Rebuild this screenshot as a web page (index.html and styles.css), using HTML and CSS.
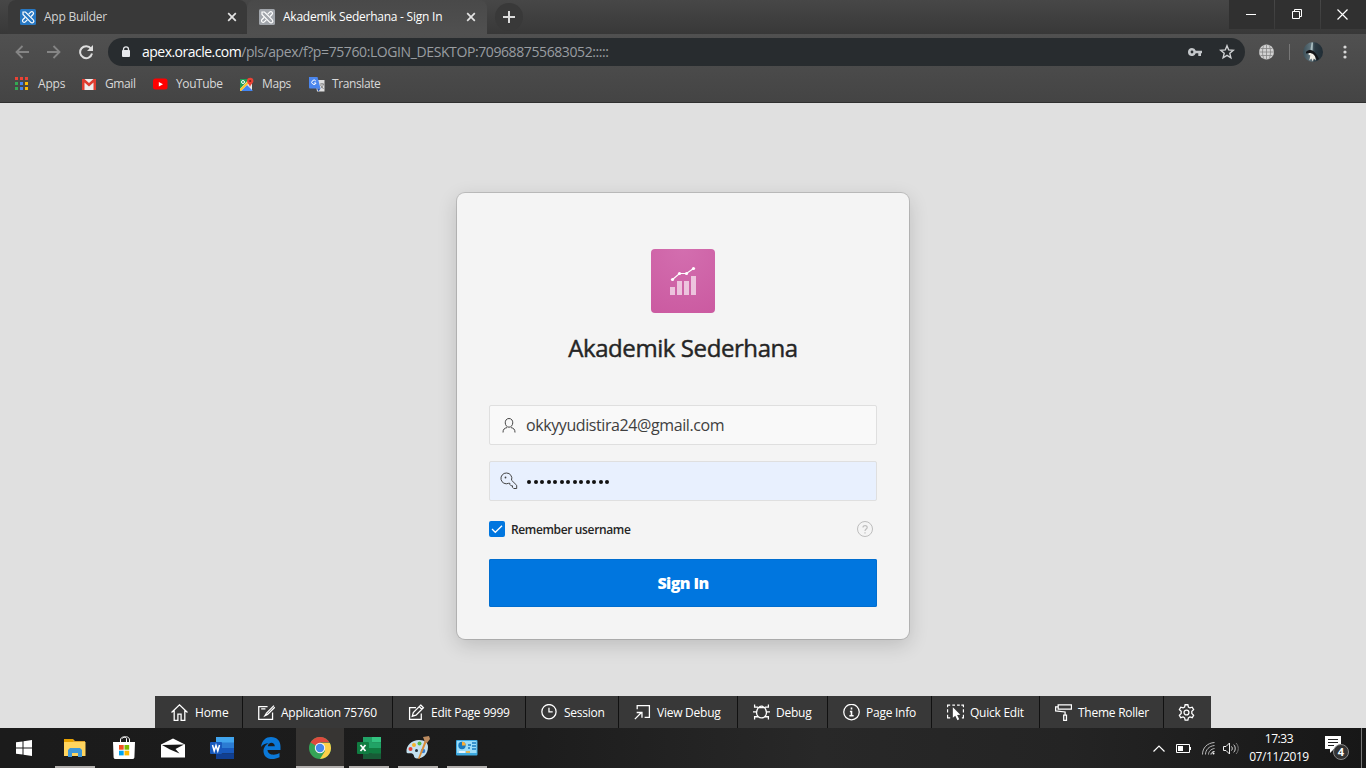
FILE: index.html
```html
<!DOCTYPE html>
<html lang="en">
<head>
<meta charset="utf-8">
<title>Akademik Sederhana - Sign In</title>
<link rel="stylesheet" href="styles.css">
</head>
<body>
<svg class="defs" width="0" height="0">
  <symbol id="apex" viewBox="0 0 16 16"><rect width="16" height="16" rx="1.500"/><g fill="none" stroke="#fff" stroke-width="1.200"><path d="M3 5.500V3h2.500l7.800 7.800a1.700 1.700 0 0 1-2.500 2.500z"/><path d="M8.700 5.200l2-2a1.600 1.600 0 0 1 2.300 2.300l-2 2M7.300 10.800l-2 2a1.600 1.600 0 0 1-2.300-2.300l2-2"/></g></symbol>
  <symbol id="cross" viewBox="0 0 10 10"><path d="M1.200 1.200l7.600 7.600M8.800 1.200L1.200 8.800" stroke="currentColor" stroke-width="1.700" fill="none"/></symbol>
</svg>
<div class="screen">
  <header class="tabstrip">
    <div class="tab"><svg class="fav blue" width="16" height="16"><use href="#apex"/></svg><span class="tab-title">App Builder</span><svg class="close" width="10" height="10"><use href="#cross"/></svg></div>
    <div class="tab active"><svg class="fav gray" width="16" height="16"><use href="#apex"/></svg><span class="tab-title">Akademik Sederhana - Sign In</span><svg class="close" width="10" height="10"><use href="#cross"/></svg></div>
    <div class="newtab"><svg width="12" height="12"><path d="M6 0v12M0 6h12" stroke="#dcdcdc" stroke-width="2"/></svg></div>
    <div class="winbtns">
      <div class="wb"><svg width="10" height="10"><path d="M0 5.500h10" stroke="#fff"/></svg></div>
      <div class="wb"><svg width="10" height="10" fill="none" stroke="#fff"><path d="M.5 2.500h7v7h-7zM2.500 2.500v-2h7v7h-2"/></svg></div>
      <div class="wb"><svg width="11" height="11"><path d="M.5.500l10 10M10.500.500l-10 10" stroke="#fff" stroke-width="1.200"/></svg></div>
    </div>
  </header>
  <div class="toolbar">
    <div class="nav">
      <svg width="14" height="14" class="dim"><path d="M14 7H1.500M7.500 1L1.500 7l6 6"/></svg>
      <svg width="14" height="14" class="dim"><path d="M0 7h12.500M6.500 1l6 6-6 6"/></svg>
      <svg width="16" height="16" viewBox="0 0 16 16"><path d="M12 4.600A6 6 0 1 0 13 9.500" fill="none" stroke="#dedede" stroke-width="2"/><path d="M14 1v6H8z" fill="#dedede"/></svg>
    </div>
    <div class="omnibox">
      <svg class="lock" width="10" height="12"><path d="M2.500 5V3.200a2.500 2.300 0 0 1 5 0V5" fill="none" stroke="#e8eaed" stroke-width="1.300"/><rect x="1" y="4" width="8" height="7" rx="1" fill="#e8eaed"/></svg>
      <span class="url"><span class="host">apex.oracle.com</span><span class="path">/pls/apex/f?p=75760:LOGIN_DESKTOP:709688755683052:::::</span></span>
      <svg class="pwkey" width="14" height="8"><path fill="#c4c7ca" fill-rule="evenodd" d="M4 0a4 4 0 0 1 3.800 2.700H14v2.600h-1V8h-2.700V5.300H7.800A4 4 0 1 1 4 0zm0 2.600a1.400 1.400 0 1 0 0 2.800 1.400 1.400 0 0 0 0-2.800z"/></svg>
      <svg class="star" width="16" height="16"><path d="M8 1.700l1.700 4.200 4.600.4-3.500 3 1.100 4.500L8 11.400l-3.900 2.400 1.100-4.500-3.500-3 4.600-.4z" fill="none" stroke="#d0d2d4" stroke-width="1.400"/></svg>
    </div>
    <svg class="globe" width="16" height="16"><circle cx="8.500" cy="8" r="7.500" fill="#d2d2d2"/><path d="M8.500 .5v15M1 8h15M2.500 4.500h12M2.500 11.500h12M6 1C4 5 4 11 6 15M11 1c2 4 2 10 0 14" fill="none" stroke="#858585" stroke-width=".8"/></svg>
    <i class="vsep"></i>
    <svg class="avatar" width="20" height="20"><defs><linearGradient id="av"><stop stop-color="#3d4f57"/><stop offset=".4" stop-color="#60757e"/><stop offset=".6" stop-color="#2b3a43"/><stop offset="1" stop-color="#202c34"/></linearGradient></defs><circle cx="10" cy="10" r="10" fill="url(#av)"/><path d="M8.500.500l-1 7 2 2 .5-9z" fill="#a9bdc0"/><path d="M5 12l3-2.500 4 2 .8 7-2-2-1 3-1.500-3-2 2 1-5z" fill="#f2eee6"/><path d="M3 10c4-4 9-2 13 7l-2 1c-3-7-6-8-11-6.500z" fill="#151518"/></svg>
    <svg class="menu" width="4" height="14"><circle cx="2" cy="2" r="1.600"/><circle cx="2" cy="7" r="1.600"/><circle cx="2" cy="12" r="1.600"/></svg>
  </div>
  <nav class="bookmarks">
    <span class="bm"><svg width="14" height="14"><g fill="#ea4335"><path d="M0 0h3v3H0zM5 0h3v3H5zM10 0h3v3h-3z"/></g><path d="M0 5h3v3H0zM0 10h3v3H0z" fill="#34a853"/><path d="M5 5h3v3H5zM5 10h3v3H5z" fill="#4285f4"/><path d="M10 5h3v3h-3zM10 10h3v3h-3z" fill="#fbbc05"/></svg><span>Apps</span></span>
    <span class="bm"><svg width="14" height="12"><path d="M0 1h14v11H0z" fill="#eee"/><path d="M0 1h2.500L7 5l4.500-4H14v11h-2.500V4.500L7 8.500l-4.500-4V12H0z" fill="#df3d30"/></svg><span>Gmail</span></span>
    <span class="bm"><svg width="15" height="12"><rect y=".5" width="14.500" height="11" rx="2.500" fill="red"/><path d="M5.800 4l4.200 2.200-4.200 2.200z" fill="#fff"/></svg><span>YouTube</span></span>
    <span class="bm"><svg width="15" height="15"><path d="M1 2h12v12H1z" fill="#e9e9e9"/><path d="M1 2h9L1 12z" fill="#209c55"/><path d="M2 14l6-6 6 6z" fill="#4285f4"/><path d="M1 12L12 1v3L2 14H1z" fill="#fbc52b"/><circle cx="4" cy="5" r="1.500" fill="none" stroke="#fff"/><path d="M11 10C10 7 8 6 8 4a3.200 3.200 0 0 1 6.400 0c0 2-2.400 3-3.400 6z" fill="#e84335"/><circle cx="11.200" cy="4" r="1.100" fill="#821f19"/></svg><span>Maps</span></span>
    <span class="bm"><svg width="16" height="15"><path d="M6 3h9.500v11.500H8z" fill="#dedede"/><path d="M0 0h8.500l3 11.500H1a1 1 0 0 1-1-1z" fill="#4b86ed"/><path d="M8 11.500h3.500l-2 3z" fill="#2455b6"/><path d="M6.800 4a2.200 2.200 0 1 0 .3 2H5" stroke="#fff" fill="none"/><path d="M11 7h4M13 6v1M11.500 8l3 4M14.500 7c-.5 2-1.500 3-2.500 4" stroke="#777" fill="none" stroke-width=".8"/></svg><span>Translate</span></span>
  </nav>
  <main class="page">
    <form class="card">
      <div class="logo"><svg width="28" height="30"><g fill="#fff" opacity=".62"><path d="M1 21h5v8H1zM8 15h5v14H8zM15 15h5v14h-5zM22 10h5v19h-5z"/></g><path d="M3.500 13.500L10.500 7.500h7l7-5" stroke="#fff" fill="none" stroke-width="1.200"/><g fill="#fff"><circle cx="3.500" cy="13.500" r="1.600"/><circle cx="10.500" cy="7.500" r="1.600"/><circle cx="17.500" cy="7.500" r="1.600"/><circle cx="24.500" cy="2.500" r="1.600"/></g></svg></div>
      <h1>Akademik Sederhana</h1>
      <div class="field"><svg width="18" height="18" fill="none" stroke="#444"><path d="M9 2.500c5.300 0 4.700 8.700 0 8.700s-5.300-8.700 0-8.700zM3 16.500c0-3.400 1.500-4.300 4-4.900M15 16.500c0-3.400-1.500-4.300-4-4.900"/></svg><span class="user">okkyyudistira24@gmail.com</span></div>
      <div class="field filled"><svg width="18" height="18" fill="none" stroke="#444"><path d="M6.500 1a5.300 5.300 0 0 1 5 7.200l5.200 5.100v3.200h-3l-1.200-1.200v-1.500h-1.400l-1.200-1.300v-1.200H8.600A5.400 5.400 0 1 1 6.500 1z"/><circle cx="5.500" cy="5.500" r=".9" fill="#444" stroke="none"/></svg><span class="dots"><i></i><i></i><i></i><i></i><i></i><i></i><i></i><i></i><i></i><i></i><i></i><i></i><i></i></span></div>
      <div class="remember"><span class="check"><svg width="16" height="16"><path d="M3 8l3.300 3.300L13 4.800" stroke="#fff" stroke-width="1.300" fill="none"/></svg></span><label>Remember username</label><svg class="help" width="16" height="16" fill="none" stroke="#bdbdbd"><circle cx="8" cy="8" r="7.500"/><path d="M6 6.500c0-2.700 4.200-2.500 4.200 0C10.200 8 8 8 8 10M8 11.200v1.300" stroke-width="1.200"/></svg></div>
      <div class="signin">Sign In</div>
    </form>
    <div class="devbar">
      <div><svg viewBox="0 0 16 16"><path d="M.5 8L8 .8 15.500 8M3 6v9.500h3.500V9.500h3v6H13V6"/></svg>Home</div>
      <div><svg viewBox="0 0 16 16"><path d="M9 2.500H.7v12h13V8M15 1.500L8 8.500 6.500 11 9 9.800 15.800 3M3 4.500h4"/></svg>Application 75760</div>
      <div><svg viewBox="0 0 16 16"><path d="M7.500 3.500H1.500v11h11V9M12 1l2.500 2.500L7.500 10.500l-3.500 1 1-3.500zM10.500 2.500L13 5"/></svg>Edit Page 9999</div>
      <div><svg viewBox="0 0 16 16"><circle cx="7.500" cy="7.200" r="6.700"/><path d="M7.500 3.500V7.500h3.500"/></svg>Session</div>
      <div><svg viewBox="0 0 16 16"><path d="M3 5V1.500h11.500v11H10M.8 14.200L7 8M2.500 8h5v5"/></svg>View Debug</div>
      <div><svg viewBox="0 0 16 16"><path d="M5 3.500h6c2 3 2 6.500 0 8.500-1.500 1.500-4.500 1.500-6 0-2-2-2-5.500 0-8.500zM1.500.5v2.500H5M14.500.5v2.500H11M0 7.500h3.500M12.500 7.500H16M1.500 14.500V12H5M14.500 14.500V12H11M6 3.500C6 1.500 10 1.500 10 3.500"/></svg>Debug</div>
      <div><svg viewBox="0 0 16 16"><circle cx="8" cy="7.600" r="7.300"/><path d="M8 3.200v2M6.500 7H8v4M6 11h4" stroke-width="1.500"/></svg>Page Info</div>
      <div><svg viewBox="0 0 16 16"><path d="M.5 3V1H3M5 1h2.500M9.500 1H12M13.500 1h2v2M15.500 5v3M15.500 10v3H14M.5 5v3M.5 10v3H3"/><path d="M5.500 3v10l2.300-2 2 4.200 1.700-.8-2-4 3-.3z" fill="#fff" stroke="none"/></svg>Quick Edit</div>
      <div><svg viewBox="0 0 16 16"><path d="M3 .8h12.500v4H3zM3 2.700H.6V6.500L9.500 7.500v3M8.200 10.500h2.600v5H8.200z"/></svg>Theme Roller</div>
      <div><svg viewBox="0 0 16 16"><path d="M6.700.7h2.600l.5 2.200 1.400.8 2.200-.7 1.300 2.300L13 6.900v2l1.700 1.700-1.300 2.300-2.200-.7-1.400.8-.5 2.200H6.700l-.5-2.200-1.400-.8-2.200.7-1.300-2.300L3 8.900v-2L1.300 5.300 2.600 3l2.200.7 1.400-.8z"/><circle cx="8" cy="8" r="2.300"/></svg></div>
    </div>
  </main>
  <footer class="taskbar">
    <div class="start"><svg width="16" height="16" fill="#fff"><path d="M0 2.300L6.500 1.400V7.500H0zM7.500 1.200L16 0v7.500H7.500zM0 8.500h6.500v6.100L0 13.700zM7.500 8.500H16V16l-8.500-1.200z"/></svg></div>
    <div class="task run"><svg width="22" height="20" viewBox="0 0 22 20"><path d="M0 1h9l2 2h10v15H0z" fill="#dfa32c"/><path d="M0 4h21.500v14H0z" fill="#ffd45e"/><path d="M0 1h9v3H0z" fill="#e7a100"/><path d="M4 19v-7l2-2h10l2 2v7h-4v-4H8v4z" fill="#3f97d7"/></svg></div>
    <div class="task"><svg width="24" height="24"><path d="M1 6h22l-.6 15.500a2 2 0 0 1-2 1.500H3.600a2 2 0 0 1-2-1.500z" fill="#fff"/><path d="M8.500 6V4c0-3.500 5-4 6-1.500V6M10.500 2.500C12 0 17.500 0 17.500 4v2" stroke="#fff" fill="none"/><path d="M7 9h4.700v4.700H7z" fill="#f25022"/><path d="M12.500 9h4.700v4.700h-4.700z" fill="#7fba00"/><path d="M7 14.700h4.700v4.700H7z" fill="#00a4ef"/><path d="M12.500 14.700h4.700v4.700h-4.700z" fill="#ffb900"/></svg></div>
    <div class="task"><svg width="24" height="20"><path d="M0 6.500L12 .5l12 6V19.500H0z" fill="#fff"/><path d="M1 7l22-.5-8.500 4.500 4 4.500L9 11.500z" fill="#171717"/></svg></div>
    <div class="task"><svg width="24" height="22"><path d="M6 0h18v6H6z" fill="#41a5ee"/><path d="M6 5.500h18V11H6z" fill="#2b7cd3"/><path d="M6 11h18v5.500H6z" fill="#185abd"/><path d="M6 16.500h18V22H6z" fill="#103f91"/><rect y="5" width="12" height="12" rx="1" fill="#185abd"/><path d="M2.500 8l1.700 6L6 8.500 7.800 14l1.700-6" fill="none" stroke="#fff" stroke-width="1.500"/></svg></div>
    <div class="task"><svg width="22" height="22"><path d="M1 10C2 3 6 0 11 0c6 0 9.500 4 9.500 9.500V13h-13c.2 5 7 6 12 3v4.300C12 24 4 22 3.500 14.500 3.300 11 5.500 7.500 9 6 5 6.300 2.500 8 1 10zm6.800-.7h7C14.800 4.500 8.300 4.500 7.800 9.300z" fill="#0b78d7"/></svg></div>
    <div class="task current"><svg width="22" height="22"><circle cx="11" cy="11" r="11" fill="#35a457"/><path d="M11 11L1.500 5.500A11 11 0 0 1 20.500 5.500H11z" fill="#df4a3e"/><path d="M11 6h9.800A11 11 0 0 1 11 22l5-8z" fill="#fdd04a"/><circle cx="11" cy="11" r="5.200" fill="#f5f5f5"/><circle cx="11" cy="11" r="4.200" fill="#4687ed"/></svg></div>
    <div class="task run"><svg width="24" height="22"><path d="M6 0h18v22H6z" fill="#185c37"/><path d="M6 0h9v11H6z" fill="#21a366"/><path d="M15 0h9v5.500h-9z" fill="#33c481"/><path d="M15 5.500h9V11h-9z" fill="#21a366"/><path d="M15 11h9v5.500h-9zM6 11h9v5H6z" fill="#107c41"/><rect y="5" width="12" height="12" rx="1" fill="#107c41"/><path d="M3.500 8l5 6M8.500 8l-5 6" stroke="#fff" stroke-width="1.700"/></svg></div>
    <div class="task run"><svg width="24" height="24"><path d="M.5 16C0 9 6 4 13 4c6 0 9 3 9 7 0 7-5 11.500-11 11.500-4 0-2-4-5-5-2-1-5 1-5.500-1.500z" fill="#c4e1ef"/><circle cx="4.500" cy="13" r="2" fill="#e54335"/><circle cx="8" cy="9" r="2" fill="#f3b42c"/><circle cx="13.500" cy="7.500" r="2" fill="#55b949"/><circle cx="10.500" cy="14.500" r="1.500" fill="#26333b"/><circle cx="17" cy="15" r="2.300" fill="#3a80cf"/><path d="M19 4l2 1-7.500 18-1.500-.5z" fill="#d98b38"/><path d="M17 1l6-1 1 3-3 4-2-1z" fill="#bd8c60"/></svg></div>
    <div class="task run"><svg width="22" height="16"><rect width="21.500" height="15.500" rx="1" fill="#3da9e0"/><path d="M1 1h19.500v12H1z" fill="#9bdcf8"/><circle cx="6" cy="5.500" r="3.700" fill="#1879bd"/><path d="M6 5.500V1.800a3.700 3.700 0 0 1 3.700 3.700z" fill="#fbad32"/><path d="M12 8h2M12 5h3M16 3h4M16 6h4M16 9h4" stroke="#1879bd" stroke-width="1.500"/><path d="M3 12h6" stroke="#fff" stroke-width="1.500"/><path d="M10 12h4" stroke="#f7a821" stroke-width="1.500"/></svg></div>
    <div class="tray">
      <svg width="12" height="7"><path d="M.5 6.500L6 1l5.500 5.500" fill="none" stroke="#fff" stroke-width="1.200"/></svg>
      <svg class="bat" width="15" height="9"><path d="M.5.500h13v8H.5z" fill="none" stroke="#fff"/><path d="M2 2h5v5H2zM14 3h1v3h-1z" fill="#fff"/></svg>
      <svg class="wifi" width="13" height="13" fill="none" stroke="#bbb"><path d="M.5 12.500C.5 6 5 1 12.500.500M3.500 12.500C3.500 8 7 4 12.500 3.500M6.500 12.500c0-3 2.500-5.500 6-6"/><path d="M9 12.500c0-1.500 1.500-3 3.500-3" stroke="#fff"/><circle cx="11.500" cy="11.500" r="1" fill="#fff" stroke="none"/></svg>
      <svg class="vol" width="17" height="13" fill="none" stroke="#eee"><path d="M.5 4.500H3L6.500 1v11L3 8.500H.5z"/><path d="M8.500 4.500c1 1 1 3 0 4M10.700 2.700c2 2 2 5.600 0 7.600"/><path d="M13 1c3 3 3 8 0 11" stroke="#777"/></svg>
      <div class="clock"><div>17:33</div><div class="date">07/11/2019</div></div>
      <div class="notif"><svg width="16" height="17"><path d="M0 0h16v13H9l-4 4v-4H0z" fill="#fff"/><path d="M3 3.500h10M3 6.500h10M3 9.500h6" stroke="#222"/></svg><b>4</b></div>
      <i class="desk"></i>
    </div>
  </footer>
</div>
</body>
</html>
```
FILE: styles.css
```css
* { box-sizing: border-box; }
body { margin: 0; font-family: "Open Sans", "Noto Sans", sans-serif; font-size: 12px; color: #fff; }
svg { display: block; flex: none; }
.defs { position: absolute; }
.screen { width: 1366px; height: 768px; overflow: hidden; display: flex; flex-direction: column; background: #e0e0e0; white-space: nowrap; }
.tabstrip { height: 34px; display: flex; align-items: stretch; padding-left: 8px; background: linear-gradient(#474747, #383838); flex: none; }
.tab { width: 239px; display: flex; align-items: center; padding: 0 10px 0 12px; background: #393939; border-radius: 8px 8px 8px 0; color: #d2d2d2; }
.tab.active { width: 240px; padding-right: 11px; background: linear-gradient(#494949, #505050); border-radius: 8px 8px 0 0; color: #fff; }
.fav { margin-right: 8px; }
.fav.blue { fill: #2878c3; }
.fav.gray { fill: #a2a6ac; }
.tab-title { flex: 1; letter-spacing: -0.24px; padding-bottom: 1px; }
.close { color: #e4e4e4; }
.newtab { width: 28px; height: 28px; margin: 3px 0 0 8px; border-radius: 50%; background: #393939; display: flex; align-items: center; justify-content: center; }
.winbtns { display: flex; margin-left: auto; height: 29px; gap: 1px; }
.wb { width: 45px; background: #303030; display: flex; align-items: center; justify-content: center; padding: 0 1px 1px 0; }
.wb:last-child { padding-right: 2px; }
.toolbar { height: 36px; display: flex; align-items: center; background: linear-gradient(#505050, #4a4a4a); flex: none; }
.nav { width: 108px; display: flex; align-items: center; gap: 18px; padding-left: 15px; }
.dim { fill: none; stroke: #858585; stroke-width: 1.8; }
.omnibox { width: 1137px; height: 28px; border-radius: 14px; background: #282c2f; display: flex; align-items: center; padding: 0 10px 0 13px; }
.lock { margin-right: 11px; }
.url { flex: 1; font-size: 14px; color: #999da1; letter-spacing: -0.4px; padding-bottom: 1px; }
.host { color: #fff; letter-spacing: -0.52px; }
.star { margin-left: 17px; }
.globe { margin-left: 13px; }
.vsep { width: 1px; height: 16px; background: #777; margin: 0 13px 0 15px; }
.menu { margin-left: 20px; fill: #d8d8d8; }
.bookmarks { height: 33px; display: grid; grid-template-columns: 67px 71px 86px 70px 80px; padding: 0 0 4px 15px; align-items: center; background: linear-gradient(#4a4a4a, #444); border-bottom: 1px solid #303030; flex: none; color: #d9d9d9; letter-spacing: -0.4px; }
.bm { display: grid; grid-template-columns: 23px auto; align-items: center; }
.bm span { padding-bottom: 2px; }
.bm:first-child { letter-spacing: -0.2px; }
.page { height: 625px; flex: none; display: flex; flex-direction: column; align-items: center; justify-content: space-between; padding-top: 90px; }
.card { width: 452px; height: 446px; border-radius: 8px; background: #f4f4f4; box-shadow: 0 0 0 1px rgba(0,0,0,.14), 0 6px 20px rgba(0,0,0,.16); padding: 56px 32px 32px; display: flex; flex-direction: column; align-items: center; color: #252525; }
.logo { width: 64px; height: 64px; border-radius: 4px; background: radial-gradient(circle at 50% 0, #d36eaf, #ca589f 110%); display: flex; align-items: center; justify-content: center; }
h1 { margin: 18px 0 1px; height: 33px; line-height: 33px; font-size: 24px; font-weight: 500; letter-spacing: -0.42px; -webkit-text-stroke: 0.45px #252525; }
.field { width: 388px; height: 40px; border: 1px solid #dfdfdf; border-radius: 2px; background: #f9f9f9; display: flex; align-items: center; padding-left: 10px; gap: 8px; margin-top: 40px; }
.filled { background: #e8f0fe; margin-top: 16px; }
.user { font-size: 16px; color: #404040; letter-spacing: -0.41px; }
.dots { display: flex; gap: 2.5px; padding-top: 2px; padding-left: 1px; }
.dots i { width: 4px; height: 4px; border-radius: 50%; background: #111; }
.remember { width: 388px; display: flex; align-items: center; margin-top: 20px; height: 16px; font-weight: 600; font-size: 12px; letter-spacing: -0.36px; padding-right: 4px; }
.check { background: #0076df; border-radius: 2px; margin-right: 6px; }
.remember label { flex: 1; }
.signin { width: 388px; height: 48px; line-height: 48px; text-align: center; background: #0076df; box-shadow: inset 0 0 0 1px #006dcf; border-radius: 2px; color: #fff; font-weight: 800; font-size: 16px; letter-spacing: -0.6px; margin-top: 22px; }
.devbar { height: 32px; display: grid; grid-template-columns: 88px 150px 133px 93px 119px 90px 104px 108px 124px 47px; background: #383838; }
.devbar > div { display: flex; align-items: center; gap: 6px; padding-left: 15px; border-right: 1px solid #111; letter-spacing: -0.25px; }
.devbar > div:first-child { padding-left: 16px; gap: 7px; letter-spacing: -0.1px; }
.devbar > div:last-child { border: 0; padding-left: 14px; }
.devbar svg { width: 17px; height: 17px; fill: none; stroke: #fff; stroke-width: 1.2; }
.taskbar { height: 40px; flex: none; display: flex; gap: 1px; background: linear-gradient(90deg, #1b1b1b 0, #1c1c1c 38%, #282828 60%, #242424 78%, #171717); }
.start { width: 50px; display: flex; align-items: center; padding-left: 16px; }
.task { width: 48px; display: flex; align-items: center; justify-content: center; border-bottom: 2px solid transparent; padding-top: 2px; }
.run { background: linear-gradient(#b3b0ae, #b3b0ae) center bottom / 40px 2px no-repeat border-box; }
.current { background: #373533; border-bottom-color: #b3b0ae; }
.tray { margin-left: auto; display: flex; align-items: center; }
.bat { margin-left: 11px; }
.wifi { margin-left: 11px; }
.vol { margin-left: 8px; }
.clock { width: 60px; margin-left: 9px; text-align: center; line-height: 18px; letter-spacing: -0.4px; }
.notif { width: 26px; height: 24px; margin-left: 16px; position: relative; }
.notif b { position: absolute; left: 8px; top: 8px; width: 16px; height: 16px; border: 1px solid #888; border-radius: 50%; background: #333; font-size: 11px; line-height: 14px; text-align: center; }
.desk { width: 1px; height: 40px; background: #777; margin: 0 4px 0 10px; }
```
